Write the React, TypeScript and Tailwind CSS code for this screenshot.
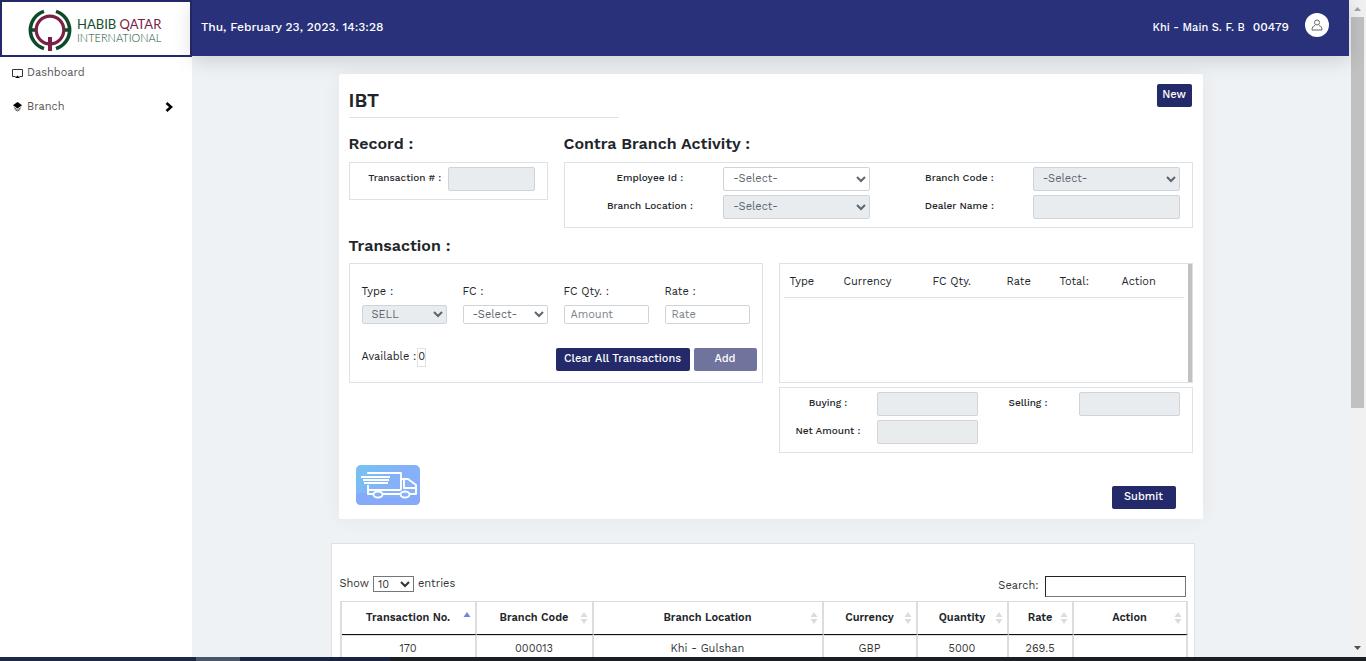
import type { ReactNode } from 'react';

const control = 'w-full rounded-xs border border-[#ced4da] text-[11px] text-[#5d656d]';
const button = 'h-[23px] rounded-xs bg-[#242a69] pb-0.5 text-[11px] leading-5 font-medium text-white';

const recordColumns = [
  { title: 'Transaction No.', width: 'w-[135px]', sorted: true },
  { title: 'Branch Code', width: 'w-[117px]' },
  { title: 'Branch Location', width: 'w-[230px]' },
  { title: 'Currency', width: 'w-[94px]' },
  { title: 'Quantity', width: 'w-[91px]' },
  { title: 'Rate', width: 'w-[65px]' },
  { title: 'Action', width: 'w-[114px]' },
];

const records = [['170', '000013', 'Khi - Gulshan', 'GBP', '5000', '269.5', '']];

const cartColumns = [
  { title: 'Type', width: 'w-[54px]' },
  { title: 'Currency', width: 'w-[89px]' },
  { title: 'FC Qty.', width: 'w-[74px]' },
  { title: 'Rate', width: 'w-[53px]' },
  { title: 'Total:', width: 'w-[62px]' },
  { title: 'Action', width: 'w-[68px]' },
];

function Logo() {
  return (
    <svg viewBox="1 0 140 48" className="h-12 w-[140px]" fill="none">
      <g stroke="#0d4a2a" strokeWidth="3.6">
        <path d="M19 5.400A19.500 19.500 0 0 0 19 42.600" />
        <path d="M31 5.400A19.500 19.500 0 0 1 31 42.600" />
        <path d="M5 24h5M40 24h5" />
      </g>
      <circle cx="25" cy="24" r="13.800" stroke="#7a1f45" strokeWidth="3.200" />
      <path d="M25 31v14" stroke="#7a1f45" strokeWidth="4" />
      <text x="52" y="23" fontSize="13" fontFamily="Lato, sans-serif" fill="#14502f">
        HABIB <tspan fill="#7a1f45">QATAR</tspan>
      </text>
      <text x="52" y="36" fontSize="11" fontWeight="300" fontFamily="Lato, sans-serif" fill="#14502f">
        INTERNATIONAL
      </text>
    </svg>
  );
}

function Truck() {
  return (
    <svg viewBox="0 0 64 40" className="h-10 w-16" fill="none">
      <defs>
        <linearGradient id="truckBg" x1="0" y1="0" x2="1" y2="0.6">
          <stop offset="0" stopColor="#74c4ee" />
          <stop offset="0.6" stopColor="#86b0fa" />
        </linearGradient>
      </defs>
      <rect width="64" height="40" rx="5" fill="url(#truckBg)" />
      <path d="M0 29q12-3 24 2t40-3v7q0 5-5 5H5q-5 0-5-5z" fill="#86aaf9" />
      <g stroke="#fff" strokeWidth="1.9" strokeLinejoin="round">
        <path d="M12 9V8h33v17M12 20v9h5M27 29h17M12 25h33M45 14h7l8 6v9h-6M48 15v8h11" />
        <path d="M5 12h29M7 15h26M8 18h24" />
        <ellipse cx="22" cy="29.500" rx="4.500" ry="3" />
        <ellipse cx="49" cy="29.500" rx="4.500" ry="3" />
      </g>
    </svg>
  );
}

function SortMark({ sorted }: { sorted?: boolean }) {
  return (
    <svg viewBox="0 0 8 12" className="absolute top-2.5 right-1 h-3 w-2">
      <path d="M4 0l3.500 5h-7z" fill={sorted ? '#7b80e0' : '#dcdcdc'} />
      {!sorted && <path d="M4 12L.5 7h7z" fill="#dcdcdc" />}
    </svg>
  );
}

function FieldLabel({ id, children }: { id: string; children: ReactNode }) {
  return (
    <label htmlFor={id} className="text-center text-[10px] leading-[22px] font-medium text-[#212529]">
      {children}
    </label>
  );
}

function Heading({ children }: { children: ReactNode }) {
  return <h2 className="text-base leading-5 font-semibold text-[#212529]">{children}</h2>;
}

function Sidebar() {
  return (
    <aside className="flex w-48 shrink-0 flex-col bg-white">
      <div className="flex h-[57px] justify-center border-2 border-[#242a69] pt-1">
        <Logo />
      </div>
      <nav className="flex flex-col pt-px text-[11px] text-[#555]">
        <a href="#dashboard" className="flex h-[30px] items-center gap-1 pl-3">
          <svg viewBox="0 0 11 11" className="size-[11px]" fill="none" stroke="#333">
            <path d="M3.500 8.500h-3v-7h10v7h-3" />
            <path d="M5.500 7.500L8 10H3z" fill="#000" stroke="none" />
          </svg>
          Dashboard
        </a>
        <a href="#branch" className="mt-1 flex h-[30px] items-center gap-1 pr-[19px] pl-3">
          <svg viewBox="0 0 12 12" className="size-[11px]">
            <path d="M6 0l5 3.500-5 3.500-5-3.500z" fill="#000" />
            <path d="M2 6l4 2.500 4-2.500M3 8l3 2 3-2" stroke="#555" fill="none" />
          </svg>
          Branch
          <svg viewBox="0 0 8 10" className="ml-auto h-2.5 w-2" fill="none" stroke="#000" strokeWidth="2.6">
            <path d="M1.500 1l4.500 4-4.500 4" />
          </svg>
        </a>
      </nav>
    </aside>
  );
}

function Topbar() {
  return (
    <header className="z-10 flex h-14 shrink-0 items-center bg-[#28317a] pr-5 pb-0.5 pl-[9px] text-xs font-medium text-white shadow-[0_4px_20px_rgba(0,0,0,0.15)]">
      <span>Thu, February 23, 2023. 14:3:28</span>
      <span className="ml-auto flex items-baseline gap-2">
        <span className="text-[11px]">Khi - Main S. F. B</span>
        <span>00479</span>
      </span>
      <button aria-label="Profile" className="mb-1 ml-4 flex size-6 items-center justify-center rounded-full bg-white">
        <svg viewBox="0 0 12 12" className="size-3" fill="none" stroke="#666">
          <circle cx="6" cy="3.500" r="2.500" />
          <path d="M4 6.500C2 7 1 8.500 1 11h10c0-2.500-1-4-3-4.500" />
        </svg>
      </button>
    </header>
  );
}

function IbtForm() {
  return (
    <section className="mx-auto w-full max-w-[864px] rounded-xs bg-white p-2.5 text-[#212529] shadow-[0_0_20px_rgba(0,0,0,0.05)]">
      <div className="flex items-start justify-between">
        <h1 className="h-[34px] w-[270px] border-b border-[#dee2e6] pt-0.5 text-[19px] leading-[30px] font-semibold">IBT</h1>
        <button className={`${button} mr-px w-[35px]`}>New</button>
      </div>

      <div className="mt-4 grid grid-cols-[199fr_629fr] items-start gap-4">
        <div>
          <Heading>Record :</Heading>
          <div className="mt-2 grid h-[38px] grid-cols-2 border border-[#dee2e6] px-3 pt-1">
            <FieldLabel id="transaction">Transaction # :</FieldLabel>
            <input id="transaction" disabled className={`${control} h-6 bg-[#e9ecef]`} />
          </div>
        </div>
        <div>
          <Heading>Contra Branch Activity :</Heading>
          <div className="mt-2 grid h-[66px] grid-cols-2 gap-x-4 border border-[#dee2e6] px-3 pt-1">
            <div className="grid grid-cols-2 content-start gap-y-1">
              <FieldLabel id="employee">Employee Id :</FieldLabel>
              <select id="employee" className={`${control} h-6 bg-white pr-1.5 pb-0.5 pl-[5px]`}>
                <option>-Select-</option>
              </select>
              <FieldLabel id="location">Branch Location :</FieldLabel>
              <select id="location" disabled className={`${control} h-6 bg-[#e9ecef] pr-1.5 pb-0.5 pl-[5px] opacity-100`}>
                <option>-Select-</option>
              </select>
            </div>
            <div className="grid grid-cols-2 content-start gap-y-1">
              <FieldLabel id="code">Branch Code :</FieldLabel>
              <select id="code" disabled className={`${control} h-6 bg-[#e9ecef] pr-1.5 pb-0.5 pl-[5px] opacity-100`}>
                <option>-Select-</option>
              </select>
              <FieldLabel id="dealer">Dealer Name :</FieldLabel>
              <input id="dealer" disabled className={`${control} h-6 bg-[#e9ecef]`} />
            </div>
          </div>
        </div>
      </div>

      <div className="mt-2">
        <Heading>Transaction :</Heading>
      </div>
      <div className="mt-[7px] grid grid-cols-2 items-start gap-x-4">
        <div className="h-[120px] border border-[#dee2e6] px-3 pt-[18px] text-[11px]">
          <div className="grid grid-cols-4 gap-x-4">
            <div>
              <label htmlFor="type" className="block h-[23px] leading-5">Type :</label>
              <select id="type" disabled className={`${control} block h-[19px] bg-[#e9ecef] px-[5px] opacity-100`}>
                <option>SELL</option>
              </select>
            </div>
            <div>
              <label htmlFor="fc" className="block h-[23px] leading-5">FC :</label>
              <select id="fc" className={`${control} block h-[19px] bg-white px-[5px]`}>
                <option>-Select-</option>
              </select>
            </div>
            <div>
              <label htmlFor="qty" className="block h-[23px] leading-5">FC Qty. :</label>
              <input id="qty" placeholder="Amount" className={`${control} block h-[19px] px-1.5 placeholder:text-[#7b838a]`} />
            </div>
            <div>
              <label htmlFor="rate" className="block h-[23px] leading-5">Rate :</label>
              <input id="rate" placeholder="Rate" className={`${control} block h-[19px] px-1.5 placeholder:text-[#7b838a]`} />
            </div>
          </div>
          <div className="mt-6 -mr-[7px] flex items-start">
            <span className="leading-[18px]">Available :</span>
            <output className="ml-px h-[19px] border border-[#dee2e6] leading-4">0</output>
            <button className={`${button} ml-auto w-[134px]`}>Clear All Transactions</button>
            <button disabled className={`${button} ml-1 w-[63px] opacity-65`}>Add</button>
          </div>
        </div>

        <div>
          <div className="flex h-[120px] border border-[#dee2e6]">
            <div className="flex-1 px-1">
              <table className="w-full table-fixed border-b border-[#dee2e6] text-[11px]">
                <thead>
                  <tr className="h-[33px]">
                    {cartColumns.map((c) => (
                      <th key={c.title} className={`${c.width} pt-1 pl-1.5 text-left font-normal`}>{c.title}</th>
                    ))}
                  </tr>
                </thead>
              </table>
            </div>
            <div className="w-1 bg-[#c1c1c1]" />
          </div>
          <div className="mt-1 grid h-[66px] grid-cols-[97fr_101fr_101fr_101fr] content-start gap-y-1 border border-[#dee2e6] pt-1 pr-3">
            <FieldLabel id="buying">Buying :</FieldLabel>
            <input id="buying" disabled className={`${control} h-6 bg-[#e9ecef]`} />
            <FieldLabel id="selling">Selling :</FieldLabel>
            <input id="selling" disabled className={`${control} h-6 bg-[#e9ecef]`} />
            <FieldLabel id="net">Net Amount :</FieldLabel>
            <input id="net" disabled className={`${control} h-6 bg-[#e9ecef]`} />
          </div>
        </div>
      </div>

      <div className="mt-3 flex items-start justify-between pr-[17px] pl-[7px]">
        <Truck />
        <button className={`${button} mt-[21px] w-16`}>Submit</button>
      </div>
    </section>
  );
}

function Records() {
  return (
    <section className="mt-6 pr-4">
      <div className="mx-auto w-full max-w-[864px] border border-[#dee2e6] bg-white px-2 pt-8 pb-4 text-[11px] text-[#333]">
        <div className="flex h-[25px] items-start justify-between">
          <label className="flex h-4 items-center gap-1">
            Show
            <select className="h-4 w-[41px] border border-[#767676] bg-white">
              <option>10</option>
            </select>
            entries
          </label>
          <label className="flex items-center gap-1.5">
            Search:
            <input type="search" className="h-[21px] w-[141px] border border-[#777] border-t-[#222] border-l-[#222] bg-white" />
          </label>
        </div>
        <table className="w-full table-fixed border-separate border-spacing-0 border-t border-l-2 border-[#ddd]">
          <thead className="text-[#212529]">
            <tr className="h-[33px]">
              {recordColumns.map((c) => (
                <th key={c.title} className={`${c.width} relative border-r-2 border-b border-r-[#ddd] border-b-[#111] font-semibold`}>
                  {c.title}
                  <SortMark sorted={c.sorted} />
                </th>
              ))}
            </tr>
          </thead>
          <tbody>
            {records.map((row) => (
              <tr key={row[0]} className="h-7">
                {row.map((cell, i) => (
                  <td key={i} className="border-t border-r-2 border-[#ddd] text-center">{cell}</td>
                ))}
              </tr>
            ))}
          </tbody>
        </table>
      </div>
    </section>
  );
}

function Scrollbar() {
  return (
    <div className="flex w-[17px] shrink-0 flex-col items-center bg-[#f1f1f1]">
      <svg viewBox="0 0 17 17" className="h-[17px] w-[17px]">
        <path d="M5 11l3.500-4 3.500 4z" fill="#a3a3a3" />
      </svg>
      <div className="h-[59.5%] w-[13px] bg-[#c1c1c1]" />
      <svg viewBox="0 0 17 17" className="mt-auto h-[17px] w-[17px]">
        <path d="M5 6l3.500 4 3.500-4z" fill="#505050" />
      </svg>
    </div>
  );
}

export default function App() {
  return (
    <div className="flex h-screen flex-col overflow-hidden font-['Work_Sans','Inter',sans-serif]">
      <div className="flex min-h-0 flex-1">
        <Sidebar />
        <div className="flex min-w-0 flex-1 flex-col bg-[#eef2f5]">
          <Topbar />
          <main className="min-h-0 flex-1 overflow-hidden pt-[18px]">
            <IbtForm />
            <Records />
          </main>
        </div>
        <Scrollbar />
      </div>
      <div className="flex h-1 shrink-0 bg-[#1b1f24]">
        <div className="h-1 w-[196px] bg-[#1d2943]" />
        <div className="h-1 w-11 bg-[#4a5468]" />
        <div className="h-1 w-[150px] bg-[#1a2440]" />
      </div>
    </div>
  );
}
